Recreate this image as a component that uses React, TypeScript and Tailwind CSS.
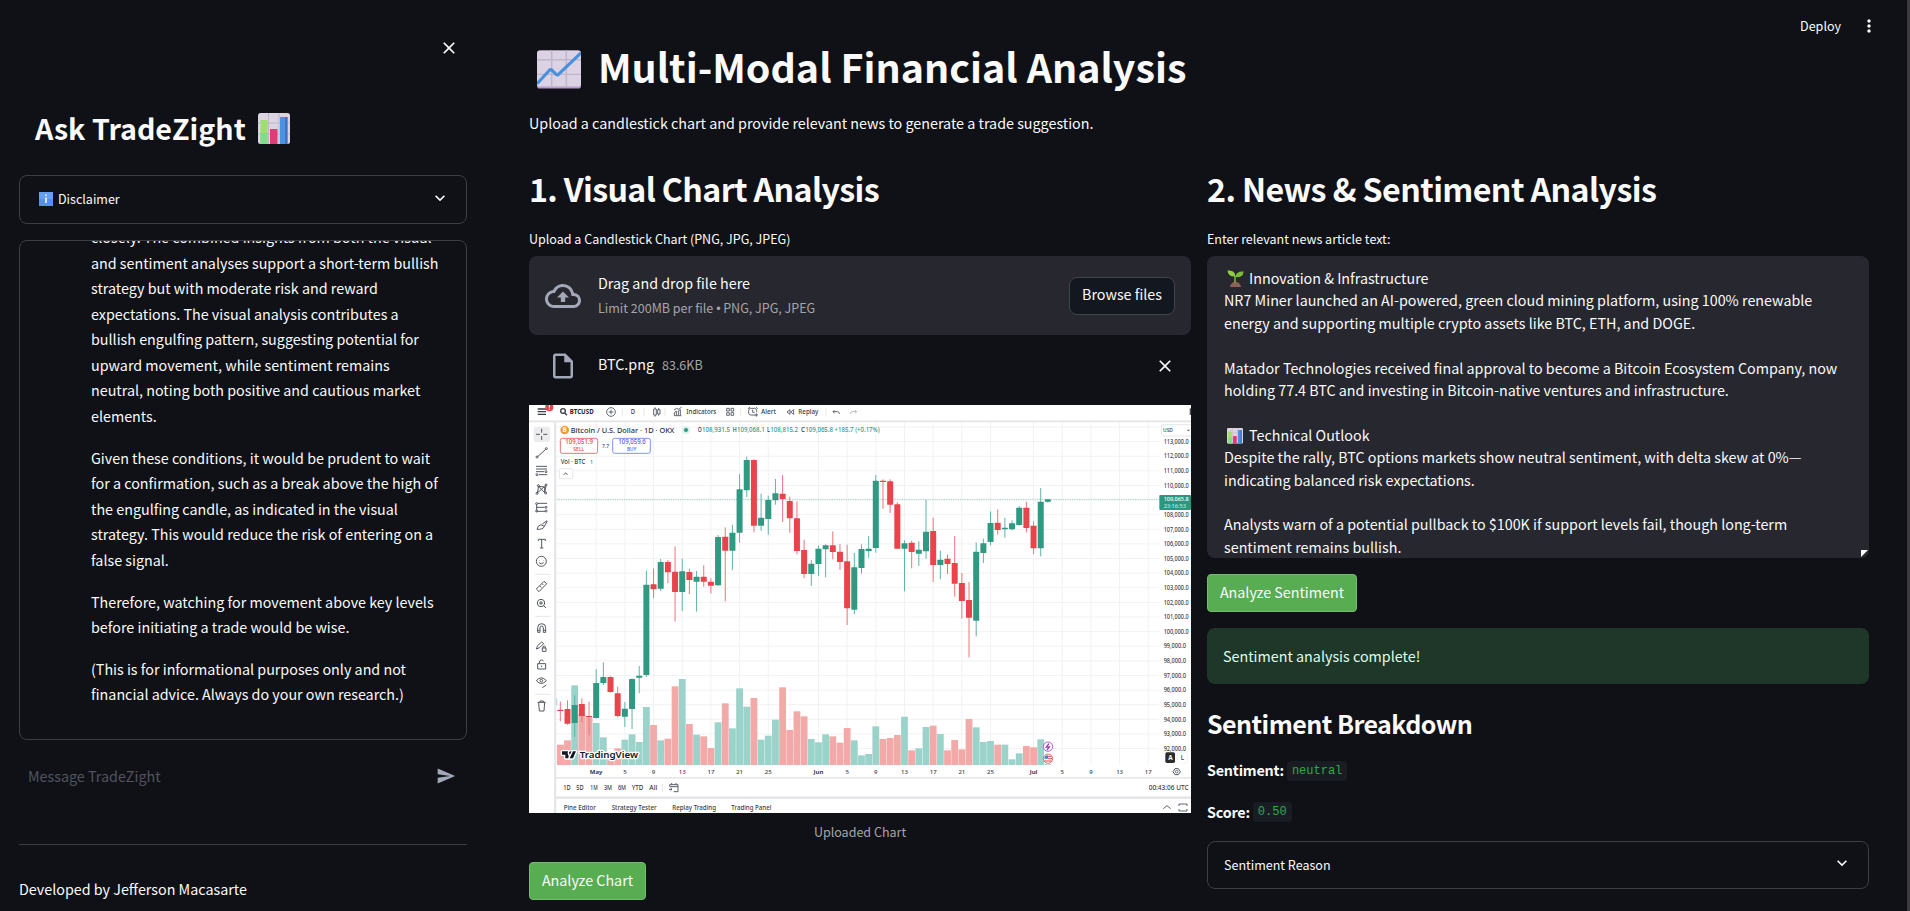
import React from "react";
import {
  MdClose,
  MdExpandMore,
  MdMoreVert,
  MdOutlineCloudUpload,
  MdOutlineInsertDriveFile,
  MdSend,
} from "react-icons/md";

type Candle = ["r" | "g", number, number, number, number, number];

// [direction, high, body top, body bottom, low, volume top]
const CANDLES: Candle[] = [
  ["r", 905, 929, 933, 964, 419], ["r", 901, 927, 971, 974, 406], ["g", 886, 915, 969, 1011, 241],
  ["r", 895, 912, 948, 968, 328], ["r", 905, 948, 951, 1006, 333], ["g", 808, 849, 954, 955, 354],
  ["g", 787, 831, 849, 855, 397], ["r", 829, 831, 876, 878, 441], ["r", 860, 880, 948, 952, 430],
  ["g", 906, 926, 950, 981, 404], ["g", 835, 837, 927, 987, 388], ["g", 798, 827, 833, 880, 411],
  ["g", 512, 554, 825, 831, 306], ["r", 506, 553, 568, 594, 360], ["g", 477, 486, 566, 573, 406],
  ["r", 480, 486, 517, 549, 401], ["r", 439, 515, 576, 664, 244], ["g", 476, 514, 576, 633, 222],
  ["r", 506, 516, 540, 582, 357], ["g", 513, 530, 545, 635, 389], ["r", 496, 530, 545, 560, 394],
  ["r", 535, 545, 557, 580, 429], ["g", 405, 411, 556, 558, 352], ["r", 382, 410, 452, 604, 295],
  ["g", 374, 398, 452, 510, 370], ["g", 222, 268, 398, 428, 250], ["g", 170, 180, 271, 291, 305],
  ["r", 178, 180, 377, 397, 279], ["g", 281, 353, 377, 392, 404], ["g", 287, 300, 357, 404, 392],
  ["g", 237, 280, 301, 314, 344], ["r", 225, 281, 297, 366, 247], ["r", 290, 303, 355, 398, 375],
  ["r", 304, 355, 453, 463, 319], ["r", 419, 450, 522, 534, 334], ["g", 480, 491, 522, 558, 402],
  ["g", 437, 446, 492, 528, 412], ["g", 433, 436, 448, 532, 388], ["r", 394, 436, 456, 478, 394],
  ["r", 432, 455, 486, 510, 413], ["r", 434, 484, 625, 675, 369], ["g", 459, 502, 629, 643, 406],
  ["g", 433, 447, 504, 521, 451], ["g", 408, 446, 453, 473, 447], ["g", 225, 242, 444, 458, 364],
  ["r", 238, 242, 246, 326, 402], ["r", 238, 244, 314, 339, 399], ["r", 307, 313, 446, 446, 390],
  ["g", 421, 430, 446, 574, 335], ["r", 422, 428, 456, 505, 436], ["g", 424, 449, 461, 498, 430],
  ["g", 300, 395, 454, 476, 366], ["r", 353, 393, 495, 546, 362], ["g", 452, 479, 495, 538, 387],
  ["r", 464, 476, 492, 522, 436], ["r", 408, 489, 551, 590, 405], ["r", 519, 549, 603, 656, 433],
  ["r", 546, 600, 653, 772, 342], ["g", 427, 455, 662, 709, 367], ["g", 416, 430, 459, 489, 411],
  ["g", 334, 369, 426, 436, 408], ["r", 328, 368, 390, 404, 419], ["g", 353, 383, 388, 413, 419],
  ["g", 361, 370, 388, 391, 463], ["g", 318, 323, 375, 377, 445], ["r", 305, 323, 384, 397, 423],
  ["r", 364, 377, 445, 462, 427], ["g", 264, 305, 445, 469, 403], ["g", 297, 298, 305, 308, 478],
];

const DATES: [number, string][] = [
  [5, "May"], [9, "5"], [13, "9"], [17, "13"], [21, "17"], [25, "21"], [29, "25"], [36, "Jun"],
  [40, "5"], [44, "9"], [48, "13"], [52, "17"], [56, "21"], [60, "25"], [66, "Jul"], [70, "5"],
  [74, "9"], [78, "13"], [82, "17"],
];

const xAt = (i: number) => 94 + i * 21.51;

function T({
  x, y, w, s = 22, fill = "#3a3d47", b, children, a = "start",
}: {
  x: number; y: number; w?: number; s?: number; fill?: string; b?: boolean; children: string; a?: "start" | "middle";
}) {
  return (
    <text
      x={x} y={y} fontSize={s} fill={fill} textAnchor={a} fontWeight={b ? 700 : 500}
      textLength={w} lengthAdjust="spacingAndGlyphs"
    >
      {children}
    </text>
  );
}

function TradingChart() {
  const prices = Array.from({ length: 22 }, (_, i) => 113 - i);
  return (
    <svg viewBox="0 0 1986 1224" className="block h-[408px] w-[662px] bg-white" fontFamily='"Noto Sans", "Liberation Sans", sans-serif'>
      <rect width="1986" height="1224" fill="#fff" />
      {/* grid */}
      <g stroke="#f1f2f4" strokeWidth="3">
        {DATES.map(([i]) => <line key={i} x1={xAt(i)} x2={xAt(i)} y1="52" y2="1080" />)}
        {Array.from({ length: 23 }, (_, i) => (
          <line key={i} x1="82" x2="1890" y1={66 + i * 43.85} y2={66 + i * 43.85} />
        ))}
      </g>
      {/* volume */}
      {CANDLES.map(([d, , , , , v], i) => (
        <rect key={i} x={Math.max(83, xAt(i) - 10.2)} y={v + 600} width={i === 0 ? 21 : 20.4} height={480 - v} fill={d === "g" ? "#9bd2ca" : "#f2a9a8"} />
      ))}
      <line x1="82" x2="1890" y1="283" y2="283" stroke="#a9d3cb" strokeWidth="3" strokeDasharray="4 3" />
      {/* candles */}
      {CANDLES.map(([d, h, t, b, l], i) => (
        <g key={i}>
          <rect x={xAt(i) - 1.5} y={h - 15} width="3" height={l - h} fill={d === "g" ? "#5fb5a5" : "#f0747a"} />
          <rect x={xAt(i) - 9} y={t - 15} width="18" height={Math.max(3, b - t)} rx="1.5" fill={d === "g" ? "#2f9982" : "#e9434c"} />
        </g>
      ))}
      <line x1="83" x2="83" y1="880" y2="902" stroke="#9bd2ca" strokeWidth="3" />
      {/* panel dividers */}
      <g fill="#e6e7eb">
        <rect y="46" width="1986" height="6" />
        <rect x="75" y="49" width="7" height="1175" />
        <rect x="78" y="1116" width="1908" height="5" />
        <rect x="78" y="1174" width="1908" height="8" />
      </g>
      {/* top toolbar */}
      <g stroke="#3a3d46" strokeWidth="4" fill="none">
        <path d="M26 12H51M26 20H51M26 28H51" />
        <circle cx="102" cy="18" r="7" /><path d="M107 24l7 7" />
      </g>
      <circle cx="61" cy="7" r="12" fill="#e9434c" />
      <path d="M61 0v8m0 3v3" stroke="#fff" strokeWidth="3" />
      <T x={122} y={27} w={72} s={22} b fill="#24262e">BTCUSD</T>
      <g stroke="#5b5e68" strokeWidth="2.8" fill="none">
        <circle cx="246" cy="21" r="13" /><path d="M239 21h14M246 14v14" />
        <path d="M374 12h8v18h-8zM378 7v5m0 18v5M386 14h7v13h-7zM389 9v5m0 13v5" />
        <path d="M435 32h22M436 31V23l6-5v13m6 0V18l6-4v17M435 15l8-5 6 3 9-7" />
        <path d="M593 10h8v8h-8zM606 10h8v8h-8zM593 23h8v8h-8zM606 23h8v8h-8z" />
        <path d="M679 30h-14q-6 0-6-6V16q0-6 6-6h12q6 0 6 6v6M671 14v8h6M657 11l6-5M681 6l5 5M682 25v10M677 30h10" />
        <path d="M783 14v14l-9-7zM794 14v14l-9-7z" />
        <path d="M917 15l-5 5 5 5M912 20h14q5 0 5 7" />
        <path d="M978 15l5 5-5 5M983 20h-14q-5 0-5 7" stroke="#b4b6be" />
      </g>
      <T x={305} y={27} w={13}>D</T>
      <T x={472} y={27} w={90} s={22}>Indicators</T>
      <T x={696} y={27} w={45} s={22}>Alert</T>
      <T x={808} y={27} w={60} s={22}>Replay</T>
      <g stroke="#e6e7eb" strokeWidth="3">
        <path d="M280 10v22M345 10v22M408 10v22M635 10v22M891 10v22M18 508h46M18 634h46M18 868h46M400 1136v24" />
      </g>
      <rect x="1982" y="10" width="4" height="20" fill="#555862" />
      {/* drawing tools */}
      <rect x="14" y="65" width="49" height="46" rx="6" fill="#ececee" />
      <g stroke="#55585f" strokeWidth="3" fill="none" strokeLinejoin="round">
        <path d="M38 71v12m0 10v12M21 88h12m10 0h12" />
        <path d="M26 155l24-22" /><circle cx="24" cy="156" r="3" /><circle cx="52" cy="131" r="3" />
        <path d="M21 184h33M21 192h33M21 200h24M30 209h25" /><circle cx="51" cy="200" r="3" /><circle cx="24" cy="209" r="3" />
        <path d="M25 264l4-20 18 19 4-22M29 244l18 2M25 264l22-20M47 246v17" />
        <circle cx="28" cy="242" r="3" /><circle cx="51" cy="240" r="3" /><circle cx="24" cy="265" r="3" /><circle cx="50" cy="264" r="3" />
        <path d="M26 295h28M22 307h25M22 319h26M23 299v16" /><circle cx="23" cy="296" r="3" /><circle cx="51" cy="307" r="3" /><circle cx="23" cy="318" r="3" /><circle cx="51" cy="318" r="3" />
        <path d="M24 373q2-12 12-14l10 5q-3 10-22 9zM40 357l14-10M46 364l9-16" />
        <path d="M28 403h21M38 403v26M28 403v5M49 403v5M33 429h10" />
        <circle cx="37" cy="469" r="15" /><path d="M30 473q7 7 14 0M31 465v1m12-1v1" />
        <path d="M22 552l23-23 8 7-23 24zM33 543l4 4m2-11 4 4" />
        <circle cx="36" cy="594" r="11" /><path d="M44 602l7 7M30 594h12M36 588v12" />
        <path d="M26 682v-14a12 12 0 0 1 24 0v14h-7v-14a5 5 0 0 0-10 0v14zM26 676h7m10 0h7" />
        <path d="M22 732l4-10 12-11 6 5-12 12zM40 729h11v10H40zM42 729v-4q4-4 7 0v4" />
        <path d="M26 776h24v16H26zM31 776v-5q1-6 7-6 4 0 6 4M38 782v4" />
        <path d="M22 827q15-17 30 0-15 17-30 0zM40 848l12-8" /><circle cx="37" cy="827" r="4" />
        <path d="M26 892h24M29 892l2 26h14l2-26M33 892v-4h10v4" />
      </g>
      {/* symbol row */}
      <circle cx="107" cy="75" r="13" fill="#f29a33" />
      <T x={107} y={82} s={19} b fill="#fff" a="middle">B</T>
      <T x={125} y={83} w={311} s={23} fill="#30333d">Bitcoin / U.S. Dollar · 1D · OKX</T>
      <circle cx="471" cy="75" r="12" fill="#dcf1ed" />
      <circle cx="471" cy="75" r="6" fill="#269b80" />
      <T x={506} y={82} s={19} w={12}>O</T>
      <T x={519} y={82} s={19} w={84} fill="#2f9c87">108,931.5</T>
      <T x={611} y={82} s={19} w={12}>H</T>
      <T x={624} y={82} s={19} w={83} fill="#2f9c87">109,068.1</T>
      <T x={714} y={82} s={19} w={9}>L</T>
      <T x={724} y={82} s={19} w={83} fill="#2f9c87">108,815.2</T>
      <T x={816} y={82} s={19} w={12}>C</T>
      <T x={829} y={82} s={19} w={223} fill="#2f9c87">109,065.8 +185.7 (+0.17%)</T>
      <rect x="94" y="100" width="112" height="45" rx="6" fill="#fff" stroke="#ef7079" strokeWidth="3" />
      <T x={109} y={118} w={83} s={19} fill="#e9434c">109,051.9</T>
      <T x={133} y={138} w={33} s={15} fill="#e9434c">SELL</T>
      <T x={219} y={129} w={21} s={17}>7.7</T>
      <rect x="251" y="100" width="113" height="45" rx="6" fill="#fff" stroke="#7b93fb" strokeWidth="3" />
      <T x={268} y={118} w={82} s={19} fill="#4263f5">109,059.6</T>
      <T x={294} y={138} w={28} s={15} fill="#4263f5">BUY</T>
      <T x={95} y={176} w={74} s={19}>Vol · BTC</T>
      <T x={182} y={176} s={18} fill="#2f9c87">1</T>
      <rect x="91" y="191" width="40" height="30" rx="5" fill="#fff" stroke="#e6e7eb" strokeWidth="3" />
      <path d="M104 209l6-5 6 5" stroke="#55585f" strokeWidth="3" fill="none" />
      {/* price axis */}
      <rect x="1897" y="59" width="100" height="34" rx="4" fill="#fff" stroke="#e6e7eb" strokeWidth="3" />
      <T x={1902} y={82} w={30} s={18}>USD</T>
      <path d="M1973 74l5 5 5-5z" fill="#55585f" />
      {prices.map((p, i) => p !== 109 && (
        <T key={p} x={1904} y={116.5 + i * 43.85} w={p > 99 ? 75 : 67} s={18.5}>{`${p},000.0`}</T>
      ))}
      <rect x="1891" y="270" width="95" height="45" rx="3" fill="#2b9780" />
      <T x={1904} y={289} w={75} s={18} fill="#fff">109,065.8</T>
      <T x={1904} y={309} w={67} s={18} fill="#c5e5df">23:16:53</T>
      <rect x="1909" y="1042" width="29" height="32" rx="5" fill="#2b2b2e" />
      <T x={1924} y={1065} s={19} b fill="#fff" a="middle">A</T>
      <rect x="1945" y="1042" width="30" height="32" rx="5" fill="#fff" stroke="#eee" strokeWidth="2" />
      <T x={1960} y={1065} s={19} a="middle">L</T>
      <path d="M1938 1091h10l6 9-6 9h-10l-6-9z" fill="none" stroke="#55585f" strokeWidth="3" />
      <circle cx="1943" cy="1100" r="4" fill="none" stroke="#55585f" strokeWidth="2.5" />
      {/* time axis */}
      {DATES.map(([i, t]) => (
        <T key={i} x={xAt(i)} y={1106} s={18} b={t.length === 3} a="middle">{t}</T>
      ))}
      {/* event markers */}
      <circle cx="1557" cy="1025" r="14" fill="#fff" stroke="#b95bca" strokeWidth="3" />
      <path d="M1560 1016l-8 10h9l-7 9" fill="none" stroke="#a63bbb" strokeWidth="4" />
      <circle cx="1557" cy="1061" r="14" fill="#fff" stroke="#ec6d74" strokeWidth="3" />
      <path d="M1557 1054h11M1557 1061h12M1546 1068h22" stroke="#e9434c" strokeWidth="3" />
      <path d="M1546 1061q0-10 11-10v10z" fill="#3f7fe0" />
      {/* brand mark */}
      <g stroke="#fff" strokeWidth="8" strokeLinejoin="round" paintOrder="stroke" fill="#131722">
        <path d="M99 1039h20v21h-10v-11H99z" />
        <circle cx="125" cy="1044" r="5" />
        <path d="M132 1039h9l-9 21h-10z" />
        <text x="152" y="1060" fontSize="27" fontWeight="600" textLength="175" lengthAdjust="spacingAndGlyphs">TradingView</text>
      </g>
      {/* range row */}
      <T x={103} y={1156} w={22} s={20}>1D</T>
      <T x={142} y={1156} w={22} s={20}>5D</T>
      <T x={184} y={1156} w={22} s={20}>1M</T>
      <T x={225} y={1156} w={24} s={20}>3M</T>
      <T x={267} y={1156} w={24} s={20}>6M</T>
      <T x={308} y={1156} w={35} s={20}>YTD</T>
      <T x={361} y={1156} w={24} s={20}>All</T>
      <path d="M422 1144v-5h25v21h-13M422 1145h25M428 1134v5m13-5v5M420 1153h9m-4-4 4 4-4 4" fill="none" stroke="#5b5e68" strokeWidth="3" />
      <T x={1859} y={1155} w={120} s={20}>00:43:06 UTC</T>
      <T x={104} y={1214} w={97} s={20}>Pine Editor</T>
      <T x={248} y={1214} w={135} s={20}>Strategy Tester</T>
      <T x={430} y={1214} w={131} s={20}>Replay Trading</T>
      <T x={607} y={1214} w={120} s={20}>Trading Panel</T>
      <path d="M1903 1211l11-9 11 9" fill="none" stroke="#5b5e68" strokeWidth="3" />
      <path d="M1950 1203v-6h7m10 0h7v6m0 9v6h-7m-10 0h-7v-6M1957 1197h10M1957 1218h10" fill="none" stroke="#5b5e68" strokeWidth="3" />
    </svg>
  );
}

function BarEmoji({ className }: { className: string }) {
  return (
    <svg viewBox="0 0 32 32" className={className}>
      <rect width="32" height="31" rx="2.5" fill="#dcd3e3" />
      <path d="M10.5 0v31M21 0v31M0 10h32M0 21h32" stroke="#bfb5cb" strokeWidth="1" />
      <rect x="2.5" y="7" width="7" height="24" fill="#9be06c" />
      <rect x="2.5" y="20" width="7" height="11" fill="#7fdc8a" />
      <rect x="12" y="16" width="7.5" height="15" fill="#dd3c77" />
      <rect x="22" y="4" width="7.5" height="27" fill="#4a93e0" />
      <rect x="27" y="4" width="2.5" height="27" fill="#4472c4" />
    </svg>
  );
}

function TrendEmoji({ className }: { className: string }) {
  return (
    <svg viewBox="0 0 45 39" className={className}>
      <rect width="45" height="39" rx="3" fill="#b79ccc" />
      <rect width="45" height="37" rx="3" fill="#dbd2e4" />
      <path d="M15 0v37M30 0v37M0 9.500h45M0 24.500h45" stroke="#c0b5cc" strokeWidth="1.500" />
      <path d="M0 34L12.500 20.500q1.500-1.500 3 0l4 4q1.500 1.200 3-.5L45 2.500" stroke="#4791dc" strokeWidth="3.200" fill="none" />
    </svg>
  );
}

function SeedlingEmoji({ className }: { className: string }) {
  return (
    <svg viewBox="0 0 17 17" className={className}>
      <path d="M3 17q1-5 5.500-5t5.500 5z" fill="#8d6158" />
      <path d="M8 13V6" stroke="#6aa62e" strokeWidth="1.800" />
      <path d="M8.500 6.500Q1 7 .5.500 8-.5 8.500 6.500z" fill="#8fce3f" />
      <path d="M8.500 7Q9 1 16.500 1.500 16.500 8 8.500 7z" fill="#7bbd35" />
    </svg>
  );
}

function Expander({ label, icon }: { label: string; icon?: React.ReactNode }) {
  return (
    <div className={`flex shrink-0 items-center justify-between rounded-lg border border-[#3d3e43] pr-4 pl-4 ${icon ? "h-[49px]" : "h-12"}`}>
      <div className={`flex items-center text-[12.53px] leading-5 ${icon ? "-mt-0.5" : ""}`}>
        {icon}
        {label}
      </div>
      <MdExpandMore className="-mt-1 size-5" />
    </div>
  );
}

const CHAT: string[][] = [
  [
    "closely. The combined insights from both the visual",
    "and sentiment analyses support a short-term bullish",
    "strategy but with moderate risk and reward",
    "expectations. The visual analysis contributes a",
    "bullish engulfing pattern, suggesting potential for",
    "upward movement, while sentiment remains",
    "neutral, noting both positive and cautious market",
    "elements.",
  ],
  [
    "Given these conditions, it would be prudent to wait",
    "for a confirmation, such as a break above the high of",
    "the engulfing candle, as indicated in the visual",
    "strategy. This would reduce the risk of entering on a",
    "false signal.",
  ],
  ["Therefore, watching for movement above key levels", "before initiating a trade would be wise."],
  ["(This is for informational purposes only and not", "financial advice. Always do your own research.)"],
];

function Sidebar() {
  return (
    <aside className="flex w-[486px] shrink-0 flex-col pr-[19px] pl-[19px]">
      <div className="flex h-[109px] items-start justify-end pt-[38px] pr-2">
        <MdClose className="size-5" />
      </div>
      <div className="flex h-[66px] items-start pl-4">
        <h1 className="text-[28.65px] leading-[38px] font-bold">Ask TradeZight</h1>
        <BarEmoji className="mt-1 ml-3 size-8" />
      </div>
      <Expander
        label="Disclaimer"
        icon={
          <svg viewBox="0 0 14 14" className="mt-px mr-[5px] ml-[3px] size-[14px]">
            <rect width="14" height="14" fill="#5590ea" />
            <rect width="14" height="7" fill="#66a0f2" />
            <path d="M7 5.500V11M7 2.500v1.500" stroke="#fff" strokeWidth="1.500" />
          </svg>
        }
      />
      <div className="mt-4 flex h-[500px] shrink-0 flex-col justify-end gap-4 overflow-hidden rounded-lg border border-[#3d3e43] pb-8 pl-[71px] text-[14.32px] leading-[25.6px] whitespace-nowrap">
        {CHAT.map((lines) => (
          <p key={lines[0]}>
            {lines.map((l) => <span key={l} className="block">{l}</span>)}
          </p>
        ))}
      </div>
      <div className="mt-5 flex h-8 items-center justify-between pr-[11px] pl-[9px] text-[14.32px] text-[#51545f]">
        <span>Message TradeZight</span>
        <MdSend className="size-5 text-[#a3a8b8]" />
      </div>
      <hr className="mt-[52px] border-[#3d3e43]" />
      <p className="mt-[31px] text-[14.32px] leading-[25.6px]">Developed by Jefferson Macasarte</p>
    </aside>
  );
}

function ChartColumn() {
  return (
    <section className="w-[662px]">
      <h2 className="h-[62px] pt-px text-[32.2px] leading-[43px] font-semibold tracking-[-0.65px]">1. Visual Chart Analysis</h2>
      <p className="h-7 pt-px text-[12.53px] leading-5">Upload a Candlestick Chart (PNG, JPG, JPEG)</p>
      <div className="flex h-[79px] items-center rounded-lg bg-[#272730] px-4">
        <MdOutlineCloudUpload className="mr-[17px] size-9 text-[#a3a8b8]" />
        <div className="flex-1">
          <p className="text-[14.32px] leading-6">Drag and drop file here</p>
          <p className="pt-px text-[12.53px] leading-6 text-[#a5a5a8]">
            Limit 200MB per file<span className="mx-[3px] inline-block w-1 font-['Liberation_Sans']">•</span>PNG, JPG, JPEG
          </p>
        </div>
        <button className="h-[38px] w-[106px] rounded-lg border border-[#42444b] bg-[#131720] pb-[3px] text-[14.32px]">Browse files</button>
      </div>
      <div className="flex h-[70px] items-center px-4">
        <MdOutlineInsertDriveFile className="mt-[-9px] mr-5 ml-[3px] size-[30px] text-[#a3a8b8]" />
        <span className="mt-[-12px] text-[14.32px] leading-6">BTC.png</span>
        <span className="mt-[-10px] ml-2 flex-1 text-[12.53px] leading-6 text-[#a5a5a8]">83.6KB</span>
        <MdClose className="mt-[-8px] size-5" />
      </div>
      <TradingChart />
      <p className="mt-[7px] text-center text-[12.53px] leading-6 text-[#a5a5a8]">Uploaded Chart</p>
      <button className="mt-[18px] h-[38px] w-[117px] rounded border border-[#74bc70] bg-[#58ac52] pb-[3px] text-[14.32px]">Analyze Chart</button>
    </section>
  );
}

const NEWS = [
  "NR7 Miner launched an AI-powered, green cloud mining platform, using 100% renewable",
  "energy and supporting multiple crypto assets like BTC, ETH, and DOGE.",
  "",
  "Matador Technologies received final approval to become a Bitcoin Ecosystem Company, now",
  "holding 77.4 BTC and investing in Bitcoin-native ventures and infrastructure.",
  "",
  "#Technical Outlook",
  "Despite the rally, BTC options markets show neutral sentiment, with delta skew at 0%—",
  "indicating balanced risk expectations.",
  "",
  "Analysts warn of a potential pullback to $100K if support levels fail, though long-term",
  "sentiment remains bullish.",
];

function NewsColumn() {
  return (
    <section className="w-[662px]">
      <h2 className="h-[62px] pt-px text-[32.2px] leading-[43px] font-semibold tracking-[-0.6px]">2. News &amp; Sentiment Analysis</h2>
      <p className="h-7 pt-px text-[12.53px] leading-5">Enter relevant news article text:</p>
      <div className="relative h-[302px] overflow-hidden rounded-lg bg-[#272730] pt-[11px] pl-[17px] text-[14.32px] leading-[22.4px] whitespace-nowrap">
        <p className="flex h-[22.4px]">
          <SeedlingEmoji className="mt-[3px] mr-[5px] ml-[3px] size-[17px]" />
          Innovation &amp; Infrastructure
        </p>
        {NEWS.map((line, i) => (
          <p key={i} className="flex h-[22.4px]">
            {line.startsWith("#") && <BarEmoji className="mt-[4px] mr-[6px] ml-[3px] size-4" />}
            {line.replace("#", "")}
          </p>
        ))}
        <svg viewBox="0 0 7 7" className="absolute right-px bottom-px size-[7px]">
          <path d="M0 0h7L0 7z" fill="#fff" />
        </svg>
      </div>
      <button className="mt-4 block h-[38px] w-[150px] rounded border border-[#74bc70] bg-[#58ac52] pb-[3px] text-[14.32px]">Analyze Sentiment</button>
      <div className="mt-4 flex h-14 items-center rounded-lg bg-[#1f3729] pl-4 text-[14.32px] text-[#dffde9]">
        Sentiment analysis complete!
      </div>
      <h3 className="mt-[22px] h-[51px] text-[25.06px] leading-[34px] font-semibold tracking-[-0.55px]">Sentiment Breakdown</h3>
      <p className="flex h-[41.6px] items-start text-[14.32px] leading-[25.6px]">
        <strong className="font-semibold tracking-[-0.2px]">Sentiment:</strong>
        <code className="mt-[3.5px] ml-[3px] h-5 rounded bg-[#1a1c24] px-[5px] font-['Liberation_Mono',monospace] text-[12px] leading-5 text-[#2cab44]">neutral</code>
      </p>
      <p className="flex h-[42.400px] items-start text-[14.32px] leading-[25.6px]">
        <strong className="font-semibold tracking-[-0.2px]">Score:</strong>
        <code className="mt-[3.5px] ml-[3px] h-5 rounded bg-[#1a1c24] px-[5px] font-['Liberation_Mono',monospace] text-[12px] leading-5 text-[#2cab44]">0.50</code>
      </p>
      <Expander label="Sentiment Reason" />
    </section>
  );
}

export default function App() {
  return (
    <div className="flex h-[911px] w-[1910px] overflow-hidden bg-[#101116] font-['Noto_Sans_CJK_SC','Noto_Sans',sans-serif] text-[#fafafa]">
      <Sidebar />
      <main className="flex-1 pl-[43px]">
        <header className="flex h-[39px] items-start justify-end pt-4 pr-[28px]">
          <span className="mr-[18px] text-[12.53px] leading-5">Deploy</span>
          <MdMoreVert className="size-5" />
        </header>
        <div className="flex h-[71px] items-start pl-2">
          <TrendEmoji className="mt-[11px] mr-[17px] h-[39px] w-11" />
          <h1 className="text-[39.4px] leading-[53px] font-bold whitespace-nowrap">Multi-Modal Financial Analysis</h1>
        </div>
        <p className="h-[56px] text-[14.32px] leading-[25.6px]">
          Upload a candlestick chart and provide relevant news to generate a trade suggestion.
        </p>
        <div className="flex gap-4">
          <ChartColumn />
          <NewsColumn />
        </div>
      </main>
      <div className="w-[3px] shrink-0 bg-[#3b3b3c]" />
    </div>
  );
}
